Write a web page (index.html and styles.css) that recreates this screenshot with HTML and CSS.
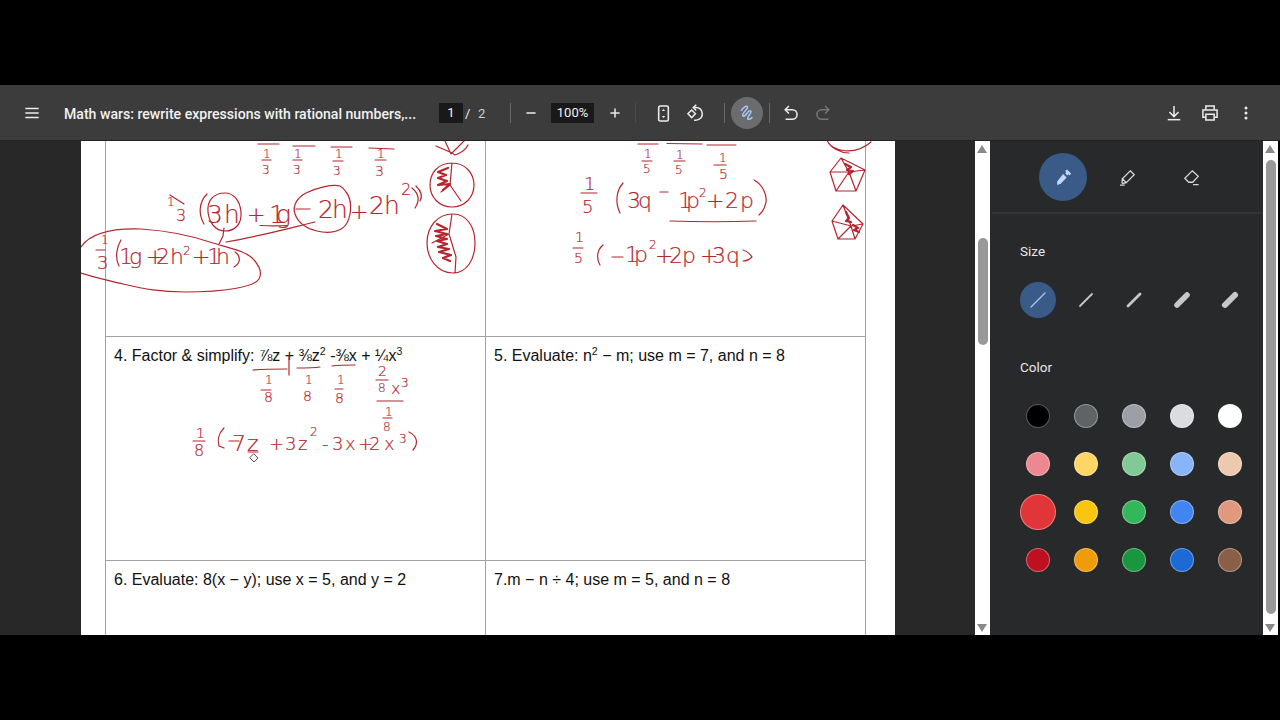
FILE: index.html
```html
<!DOCTYPE html>
<html lang="en">
<head>
    <meta charset="UTF-8">
    <meta name="viewport" content="width=device-width, initial-scale=1.0">
    <title>Math wars - PDF viewer</title>
    <link rel="stylesheet" href="styles.css">
</head>
<body>

    <div class="viewer">

        <!-- Top toolbar -->
        <header class="toolbar">
            <svg class="icon menu-icon" viewBox="0 0 24 24"><path d="M4 6.500h16M4 12h16M4 17.500h16"/></svg>
            <div class="doc-title">Math wars: rewrite expressions with rational numbers,...</div>

            <div class="page-box">1</div>
            <span class="page-sep">/</span>
            <span class="page-total">2</span>
            <div class="divider divider-a"></div>

            <svg class="icon zoom-out" viewBox="0 0 24 24"><path d="M6.500 12h11"/></svg>
            <div class="zoom-box">100%</div>
            <svg class="icon zoom-in" viewBox="0 0 24 24"><path d="M6.500 12h11M12 6.500v11"/></svg>
            <div class="divider divider-b"></div>

            <svg class="icon fit-icon" viewBox="0 0 24 24">
                <rect x="6.500" y="3.500" width="11" height="17" rx="1.500"/>
                <path class="solid" d="M12 6.800l2 2.400h-4zM12 17.200l2-2.400h-4z"/>
            </svg>
            <svg class="icon rotate-icon" viewBox="0 0 24 24">
                <path d="M3.500 13l4.500-4.500 4.500 4.500-4.500 4.500z"/>
                <path d="M10 5.500h3.500a7.500 7.500 0 0 1 3 14.200 7.500 7.500 0 0 1-5.500 .6"/>
                <path d="M13.500 2l-3.500 3.500 3.500 3.500"/>
            </svg>
            <div class="divider divider-c"></div>

            <div class="annotate-btn">
                <svg class="icon ink-icon" viewBox="0 0 24 24">
                    <path d="M5 9.500c2-4 6-6.500 7.500-5 2 2-7.500 8-5.500 11 1.500 2 5-3.500 7-5.500 1.500-1.500 3.500-.5 2.500 1.500-1 2.500-4.500 5.500-3.500 7.500 .8 1.500 4-.3 5.500-2"/>
                </svg>
            </div>
            <div class="divider divider-d"></div>

            <svg class="icon undo-icon" viewBox="0 0 24 24">
                <path d="M9.500 3.500l-4.500 4.500 4.500 4.500"/>
                <path d="M5.500 8h8a5.500 5.500 0 0 1 0 11.500h-8"/>
            </svg>
            <svg class="icon redo-icon" viewBox="0 0 24 24">
                <path d="M14.500 3.500l4.500 4.500-4.500 4.500"/>
                <path d="M18.500 8h-8a5.500 5.500 0 0 0 0 11.500h8"/>
            </svg>

            <svg class="icon download-icon" viewBox="0 0 24 24">
                <path d="M12 3.500v12.500M6.500 10.800l5.500 5.500 5.500-5.500"/>
                <path d="M4.500 20h15"/>
            </svg>
            <svg class="icon print-icon" viewBox="0 0 24 24">
                <path d="M7 8V3.500h10V8"/>
                <path d="M7 17H3.500V8.500h17V17H17"/>
                <path d="M7 13.500h10v7H7z"/>
            </svg>
            <svg class="icon dots-icon" viewBox="0 0 24 24">
                <circle class="solid" cx="12" cy="6" r="1.800"/>
                <circle class="solid" cx="12" cy="12" r="1.800"/>
                <circle class="solid" cx="12" cy="18" r="1.800"/>
            </svg>
        </header>

        <div class="workspace">

            <!-- PDF page -->
            <main class="doc-area">
                <div class="page">
                    <div class="worksheet">
                        <div class="cell cell-top"></div>
                        <div class="cell cell-top cell-right"></div>
                        <div class="cell cell-mid">4. Factor &amp; simplify: ⅞z + ⅜z<sup>2</sup> -⅜x + ¼x<sup>3</sup></div>
                        <div class="cell cell-mid cell-right">5. Evaluate: n<sup>2</sup> − m; use m = 7, and n = 8</div>
                        <div class="cell cell-low">6. Evaluate: 8(x − y); use x = 5, and y = 2</div>
                        <div class="cell cell-low cell-right">7.m − n ÷ 4; use m = 5, and n = 8</div>
                    </div>

                    <!-- Handwriting on top of the page, coordinates are the ones of the window -->
                    <svg class="ink" viewBox="81 141 814 494">
                        <!-- problem 2 -->
                        <path d="M258 144h21M293 146h22M331 147h21M369 148l25 1M262 160h9M293 160h9M333 161h10M375 160h11"/>
                        <text class="hw s12" x="263" y="158">1</text>
                        <text class="hw s12" x="262" y="174">3</text>
                        <text class="hw s12" x="294" y="158">1</text>
                        <text class="hw s12" x="293" y="174">3</text>
                        <text class="hw s12" x="335" y="158">1</text>
                        <text class="hw s12" x="333" y="175">3</text>
                        <text class="hw s12" x="377" y="158">1</text>
                        <text class="hw s14" x="375" y="176">3</text>
                        <text class="hw s12" x="167" y="206">1</text>
                        <path d="M170 195l14 9"/>
                        <text class="hw s16" x="176" y="221">3</text>
                        <path d="M207 194c-8 8-9 20-3 30"/>
                        <text class="hw s25" x="207 224" y="223">3h</text>
                        <text class="hw s22" x="247" y="222">+</text>
                        <text class="hw s25" x="269 276" y="223">1g</text>
                        <path d="M260 225.500c10 .5 18 .5 27 0"/>
                        <path d="M296 209h14"/>
                        <text class="hw s25" x="318 332" y="218">2h</text>
                        <text class="hw s22" x="350" y="219">+</text>
                        <text class="hw s25" x="369 384" y="214">2h</text>
                        <text class="hw s16" x="401" y="195">2</text>
                        <path d="M412 188c6 5 9 11 3 20M416 186c5 5 7 10 4 15"/>
                        <path d="M225 193c-12 0-18 8-17 19 1 10 7 19 17 19 10 0 17-7 16-19-1-11-7-19-16-19z"/>
                        <path d="M340 186c-8-2-24 2-34 7-8 4-14 12-11 21 3 9 12 15 22 17 12 3 25 1 30-8 5-10 5-24-1-31-2-3-4-5-6-6z"/>
                        <path d="M224 228l-1 8-4 8M226 242c30-5 60-13 89-20"/>
                        <!-- big loop round the result -->
                        <path d="M81 247c8-12 28-19 60-18 30 2 55 8 72 14 16 5 34 8 41 17 6 7 8 14 5 19-5 8-34 13-74 13-25 0-40-3-62-8-16-4-30-7-42-11"/>
                        <text class="hw s12" x="101" y="244">1</text>
                        <path d="M96 250h9"/>
                        <text class="hw s18" x="97" y="269">3</text>
                        <path d="M121 240c-5 8-6 18-2 26"/>
                        <text class="hw s22" x="119 129 146 156 170" y="264">1g+2h</text>
                        <text class="hw s12" x="183" y="255">2</text>
                        <text class="hw s22" x="192 207 216" y="264">+1h</text>
                        <path d="M235 252c6 4 6 11-1 15"/>
                        <!-- circles with the shaded parts -->
                        <path d="M436 146c6 3 14 5 19 9 6-2 11-6 13-10M445 141l6 13 15-15"/>
                        <path d="M452 163c-14 0-22 10-22 22 0 12 9 22 22 22 13 0 22-10 22-22 0-12-9-22-22-22zM452 163l-2 22 11 16M450 185l-9 7"/>
                        <path class="thick" d="M448 168l-10 4 8 3-8 3 9 3-9 4 12-1-7 6"/>
                        <path d="M453 214c-16 0-26 13-26 29 0 15 10 30 26 30 14 0 22-14 22-30 0-16-8-29-22-29zM452 214l-3 20 7 23-1 16M449 234l-17 9"/>
                        <path class="thick" d="M437 224l10 5-12 2 12 3-11 2 11 3-10 2 10 3-9 3 11 2-10 3 12 3-8 3 7 3"/>
                        <!-- problem 3 -->
                        <path d="M638 144h20M667 143.500l35 .5M707 145h29M642 161h10M674 161h11M714 165h12"/>
                        <text class="hw s12" x="644" y="158">1</text>
                        <text class="hw s12" x="643" y="173">5</text>
                        <text class="hw s12" x="676" y="159">1</text>
                        <text class="hw s12" x="675" y="174">5</text>
                        <text class="hw s12" x="719" y="162">1</text>
                        <text class="hw s14" x="719" y="179">5</text>
                        <text class="hw s18" x="584" y="190">1</text>
                        <path d="M581 193h16"/>
                        <text class="hw s18" x="582" y="213">5</text>
                        <path d="M623 183c-7 8-8 20-3 30"/>
                        <text class="hw s22" x="627 638" y="208">3q</text>
                        <path d="M660 192h8M670 221c30 1 58 1 86 0"/>
                        <text class="hw s22" x="678 686" y="208">1p</text>
                        <text class="hw s12" x="699" y="197">2</text>
                        <text class="hw s22" x="706 725 740" y="208">+2p</text>
                        <path d="M754 180c8 4 13 14 12 22-1 5-3 10-7 13"/>
                        <text class="hw s14" x="575" y="242">1</text>
                        <path d="M573 248h10"/>
                        <text class="hw s14" x="574" y="263">5</text>
                        <path d="M603 245c-6 5-7 13-3 20M612 257h11"/>
                        <text class="hw s22" x="625 634" y="262">1p</text>
                        <text class="hw s12" x="649" y="249">2</text>
                        <text class="hw s22" x="655 669 682 700 712 726" y="263">+2p+3q</text>
                        <path d="M743 250c4 1 8 5 9 7-2 2-6 4-9 4"/>
                        <!-- pentagons -->
                        <path d="M849 153c-8 0-19-5-22-13M827 140c4 12 28 16 44 2"/>
                        <path d="M841 158l-11 14 6 19h20l9-21zM841 158l8 14-13 19M849 172l7 19M849 172l16-2M849 172l-19 0"/>
                        <path class="thick" d="M845 164l6 3-4 3 6 1-4 3"/>
                        <path d="M843 205l-11 16 6 18h17l8-15zM843 205l8 21-13 13M851 226l4 13M851 226l12-2M851 226l-19-5"/>
                        <path class="thick" d="M846 212l3 6-3 3 5 1M853 225l5 3-4 2 5 2"/>
                        <!-- problem 4 -->
                        <path d="M253 370c12-1 24-1 34-1M289 355v20M297 368c8 0 16 0 23-1M332 366c8-1 16-1 23-1M261 390h10M335 389h8"/>
                        <text class="hw s12" x="265" y="384">1</text>
                        <text class="hw s14" x="264" y="402">8</text>
                        <text class="hw s12" x="305" y="384">1</text>
                        <text class="hw s14" x="303" y="401">8</text>
                        <text class="hw s12" x="337" y="384">1</text>
                        <text class="hw s14" x="335" y="403">8</text>
                        <text class="hw s14" x="378" y="376">2</text>
                        <path d="M376 380h12"/>
                        <text class="hw s12" x="378" y="392">8</text>
                        <text class="hw s16" x="391" y="394">x</text>
                        <text class="hw s12" x="401" y="387">3</text>
                        <path d="M377 401h26M383 418h9"/>
                        <text class="hw s12" x="385" y="416">1</text>
                        <text class="hw s12" x="383" y="431">8</text>
                        <text class="hw s14" x="196" y="438">1</text>
                        <path d="M193 441h12"/>
                        <text class="hw s16" x="194" y="456">8</text>
                        <path d="M224 428c-5 5-7 12-5 18l5 2"/>
                        <text class="hw s22" x="232 247" y="451">7z</text>
                        <path d="M229 441h10M248 452h10"/>
                        <text class="hw s18" x="269 285 298" y="450">+3z</text>
                        <text class="hw s12" x="310" y="436">2</text>
                        <text class="hw s18" x="322 332 345 358 369 384" y="450">-3x+2x</text>
                        <text class="hw s12" x="399" y="443">3</text>
                        <path d="M409 432c8 4 10 11 4 18"/>
                        <path class="cursor" d="M254 454l4 4-4 4-4-4z"/>
                    </svg>
                </div>
            </main>

            <div class="scrollbar scrollbar-doc">
                <div class="arrow-up"></div>
                <div class="thumb"></div>
                <div class="arrow-down"></div>
            </div>

            <!-- Annotation side panel -->
            <aside class="side-panel">
                <div class="tools">
                    <div class="tool tool-active">
                        <svg class="tool-icon" viewBox="0 0 24 24">
                            <path class="fill-blue" d="M14 3.500l2.500-1.500 5 5-1.500 2.500-1.500-1.500-1.500 1.500-3-3 1.500-1.500zM11.500 7.500l4.500 4.500-7.500 8-4.500 1.500 0-4.500z"/>
                        </svg>
                    </div>
                    <div class="tool">
                        <svg class="tool-icon" viewBox="0 0 24 24">
                            <path d="M15.500 3.500l5 5-10 10-5-5zM5.500 13.500l-.5 5 1 1 4.500-1M2.500 21.500h6"/>
                        </svg>
                    </div>
                    <div class="tool">
                        <svg class="tool-icon" viewBox="0 0 24 24">
                            <path d="M13 3.500l7.500 7-7 7.500h-5l-5-5zM14 21h7"/>
                        </svg>
                    </div>
                </div>

                <div class="panel-label size-label">Size</div>
                <div class="size-row">
                    <div class="size-opt size-active"><svg viewBox="0 0 36 36"><path class="w1 blue" d="M11 25L25 11"/></svg></div>
                    <div class="size-opt"><svg viewBox="0 0 36 36"><path class="w2" d="M12 24L24 12"/></svg></div>
                    <div class="size-opt"><svg viewBox="0 0 36 36"><path class="w3" d="M12 24L24 12"/></svg></div>
                    <div class="size-opt"><svg viewBox="0 0 36 36"><path class="w4" d="M13 23L23 13"/></svg></div>
                    <div class="size-opt"><svg viewBox="0 0 36 36"><path class="w5" d="M13 23L23 13"/></svg></div>
                </div>

                <div class="panel-label color-label">Color</div>
                <div class="color-grid">
                    <div class="slot"><span class="dot c-black"></span></div>
                    <div class="slot"><span class="dot c-grey1"></span></div>
                    <div class="slot"><span class="dot c-grey2"></span></div>
                    <div class="slot"><span class="dot c-grey3"></span></div>
                    <div class="slot"><span class="dot c-white"></span></div>
                    <div class="slot"><span class="dot c-pink"></span></div>
                    <div class="slot"><span class="dot c-lyellow"></span></div>
                    <div class="slot"><span class="dot c-lgreen"></span></div>
                    <div class="slot"><span class="dot c-lblue"></span></div>
                    <div class="slot"><span class="dot c-peach"></span></div>
                    <div class="slot"><span class="dot c-red dot-active"></span></div>
                    <div class="slot"><span class="dot c-yellow"></span></div>
                    <div class="slot"><span class="dot c-green"></span></div>
                    <div class="slot"><span class="dot c-blue"></span></div>
                    <div class="slot"><span class="dot c-salmon"></span></div>
                    <div class="slot"><span class="dot c-dred"></span></div>
                    <div class="slot"><span class="dot c-orange"></span></div>
                    <div class="slot"><span class="dot c-dgreen"></span></div>
                    <div class="slot"><span class="dot c-dblue"></span></div>
                    <div class="slot"><span class="dot c-brown"></span></div>
                </div>
            </aside>

            <div class="scrollbar scrollbar-panel">
                <div class="arrow-up"></div>
                <div class="thumb"></div>
                <div class="arrow-down"></div>
            </div>
        </div>
    </div>

</body>
</html>
```

FILE: styles.css
```css
html, body {
    margin: 0;
    height: 100%;
    background-color: #000;
    overflow: hidden;
}
body {
    padding-top: 85px;
    box-sizing: border-box;
    font-family: 'Roboto', 'Liberation Sans', sans-serif;
}

.viewer {
    height: 550px;
    display: flex;
    flex-direction: column;
}

/* Toolbar */
.toolbar {
    position: relative;
    height: 55px;
    flex: none;
    background-color: #3c3c3c;
    color: #f1f1f1;
    border-bottom: 1px solid #222;
}
.toolbar > * {
    position: absolute;
}
.icon {
    width: 20px;
    height: 20px;
    fill: none;
    stroke: #ececec;
    stroke-width: 1.800;
}
.icon .solid {
    fill: #ececec;
    stroke: none;
}
.menu-icon { left: 22px; top: 18px; }
.doc-title {
    left: 64px;
    top: 19px;
    font-size: 14.100px;
    font-weight: 500;
    line-height: 20px;
    white-space: nowrap;
}
.page-box, .zoom-box {
    top: 18px;
    height: 20px;
    line-height: 20px;
    background-color: #191919;
    text-align: center;
    font-size: 13px;
}
.page-box { left: 439px; width: 24px; }
.page-sep { left: 465px; top: 19px; font-size: 13px; line-height: 20px; }
.page-total { left: 478px; top: 19px; font-size: 13px; line-height: 20px; color: #ccc; }
.zoom-box { left: 551px; width: 43px; }
.divider {
    top: 18px;
    width: 1px;
    height: 20px;
    background-color: #6a6a6a;
}
.divider-a { left: 510px; }
.divider-b { left: 635px; background-color: #4c4c4c; }
.divider-c { left: 724px; }
.divider-d { left: 769px; }
.zoom-out { left: 521px; top: 18px; }
.zoom-in { left: 605px; top: 18px; }
.fit-icon { left: 653px; top: 18px; width: 21px; height: 21px; }
.rotate-icon { left: 685px; top: 18px; }
.annotate-btn {
    left: 731px;
    top: 12px;
    width: 32px;
    height: 32px;
    border-radius: 50%;
    background-color: #6b6c6e;
    display: flex;
    align-items: center;
    justify-content: center;
}
.ink-icon { stroke: #a8c7fa; }
.undo-icon { left: 781px; top: 18px; }
.redo-icon { left: 813px; top: 18px; stroke: #777; }
.download-icon { left: 1164px; top: 18px; }
.print-icon { left: 1200px; top: 18px; }
.dots-icon { left: 1236px; top: 18px; }

/* Area below the toolbar */
.workspace {
    flex: 1;
    display: flex;
    min-height: 0;
}
.doc-area {
    width: 975px;
    flex: none;
    padding-left: 81px;
    box-sizing: border-box;
    background-color: #282828;
    overflow: hidden;
}
.page {
    position: relative;
    width: 814px;
    height: 100%;
    background-color: #fff;
    overflow: hidden;
}
.worksheet {
    display: grid;
    grid-template-columns: 379px 380px;
    grid-template-rows: 196px 224px 224px;
    margin-left: 24px;
    width: 759px;
    border-left: 1px solid #a3a3a3;
    border-right: 1px solid #a3a3a3;
    color: #111;
    font-family: 'Liberation Sans', Arial, sans-serif;
    font-size: 16px;
}
.cell {
    box-sizing: border-box;
    border-bottom: 1px solid #a3a3a3;
    padding: 10px 8px;
    line-height: 18px;
}
.cell-right {
    border-left: 1px solid #a3a3a3;
}
.cell sup {
    font-size: 10.500px;
    line-height: 0;
}

/* Handwritten notes */
.ink {
    position: absolute;
    top: 0;
    left: 0;
    width: 814px;
    height: 494px;
    fill: none;
    stroke: #b5252e;
    stroke-width: 1.200;
    stroke-linecap: round;
    stroke-linejoin: round;
}
.ink .thick { stroke-width: 2.200; }
.ink .cursor { stroke: #555; stroke-width: 1; }
.hw {
    font-family: 'DejaVu Sans', sans-serif;
    font-weight: 200;
    fill: #b5252e;
    stroke: #b5252e;
    stroke-width: 0.200;
}
.s12 { font-size: 12px; }
.s14 { font-size: 14px; }
.s16 { font-size: 16px; }
.s18 { font-size: 18px; }
.s22 { font-size: 22px; }
.s25 { font-size: 25px; }

/* Scrollbars */
.scrollbar {
    position: relative;
    width: 15px;
    flex: none;
    background-color: #fff;
}
.arrow-up, .arrow-down {
    position: absolute;
    left: 2px;
    width: 0;
    height: 0;
    border-left: 5.500px solid transparent;
    border-right: 5.500px solid transparent;
}
.arrow-up { top: 4px; border-bottom: 8px solid #8a8a8a; }
.arrow-down { bottom: 3px; border-top: 8px solid #8a8a8a; }
.thumb {
    position: absolute;
    left: 3px;
    width: 10px;
    border-radius: 5px;
    background-color: #999;
}
.scrollbar-doc .thumb { top: 97px; height: 107px; }
.scrollbar-panel .thumb { top: 19px; height: 454px; }

/* Side panel */
.side-panel {
    width: 273px;
    flex: none;
    background-color: #28292b;
    color: #eee;
}
.tools {
    height: 59px;
    margin-left: 2px;
    padding-left: 47px;
    padding-top: 12px;
    display: flex;
    gap: 16px;
    align-items: flex-start;
    border-bottom: 2px solid #343537;
}
.tool {
    width: 48px;
    height: 48px;
    border-radius: 50%;
    display: flex;
    align-items: center;
    justify-content: center;
}
.tool-active { background-color: #3a5a87; }
.tool-icon {
    width: 19px;
    height: 19px;
    fill: none;
    stroke: #d8d8d8;
    stroke-width: 1.600;
}
.tool-icon .fill-blue { fill: #c2d7f8; stroke: none; }
.panel-label {
    margin-left: 30px;
    font-size: 13.500px;
    line-height: 16px;
    color: #e8e8e8;
}
.size-label { margin-top: 29px; }
.size-row {
    display: flex;
    margin: 23px 0 0 30px;
    gap: 12px;
}
.size-opt {
    width: 36px;
    height: 36px;
    border-radius: 50%;
}
.size-opt svg {
    width: 36px;
    height: 36px;
    fill: none;
    stroke: #c8c8c8;
    stroke-linecap: round;
}
.size-active { background-color: #3a5a87; }
.size-opt .blue { stroke: #a8c7fa; }
.w1 { stroke-width: 1.300; }
.w2 { stroke-width: 1.800; }
.w3 { stroke-width: 2.800; }
.w4 { stroke-width: 5.500; }
.w5 { stroke-width: 6; }
.color-label { margin-top: 41px; }
.color-grid {
    display: grid;
    grid-template-columns: repeat(5, 48px);
    grid-auto-rows: 48px;
    margin: 17px 0 0 24px;
}
.slot {
    display: flex;
    align-items: center;
    justify-content: center;
}
.dot {
    width: 24px;
    height: 24px;
    border-radius: 50%;
    box-sizing: border-box;
    border: 1px solid rgba(255, 255, 255, 0.35);
}
.dot-active { width: 36px; height: 36px; }
.c-black { background-color: #000; }
.c-grey1 { background-color: #5f6368; }
.c-grey2 { background-color: #9aa0a6; }
.c-grey3 { background-color: #dadce0; }
.c-white { background-color: #fff; }
.c-pink { background-color: #ee8890; }
.c-lyellow { background-color: #fdd663; }
.c-lgreen { background-color: #81c995; }
.c-lblue { background-color: #8ab4f8; }
.c-peach { background-color: #eec9ae; }
.c-red { background-color: #e0363a; }
.c-yellow { background-color: #f9c60f; }
.c-green { background-color: #34b75a; }
.c-blue { background-color: #4385f0; }
.c-salmon { background-color: #e0997f; }
.c-dred { background-color: #bd1122; }
.c-orange { background-color: #ef9c0b; }
.c-dgreen { background-color: #1a963e; }
.c-dblue { background-color: #1c6ad4; }
.c-brown { background-color: #8a5f48; }
```
